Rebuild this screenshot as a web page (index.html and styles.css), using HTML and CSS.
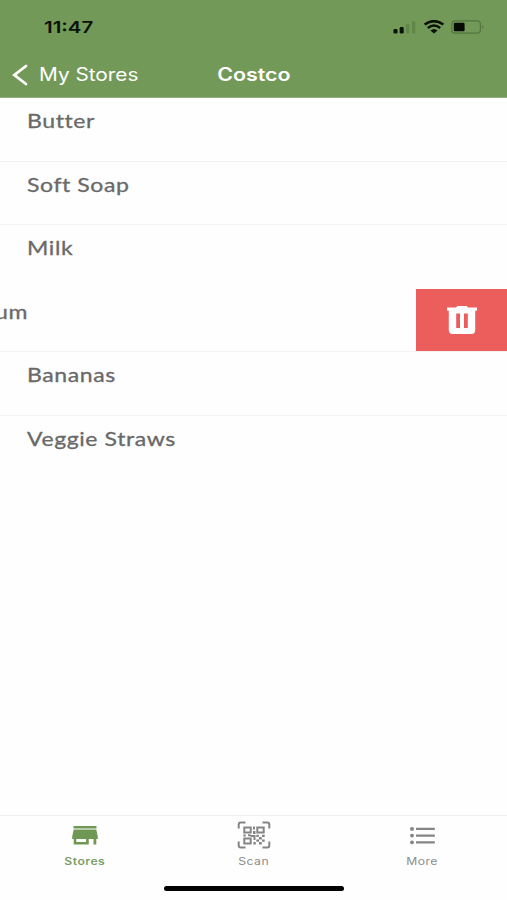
FILE: index.html
```
<!DOCTYPE html>
<html lang="en">
<head>
    <meta charset="UTF-8">
    <meta name="viewport" content="width=device-width, initial-scale=1.0">
    <title>Costco</title>
    <link rel="stylesheet" href="styles.css">
</head>
<body>
    <header class="header">
        <div class="status-bar">
            <span class="time">11:47</span>
            <div class="status-icons">
                <svg width="24" height="14" viewBox="0 0 24 14">
                    <rect x="0.5" y="9" width="4" height="4.4" rx="1.2" fill="#0a1205"/>
                    <rect x="6.7" y="7" width="4" height="6.4" rx="1.2" fill="#0a1205"/>
                    <rect x="13" y="4" width="3.4" height="9.4" rx="1.2" fill="#628549"/>
                    <rect x="19" y="1.2" width="3.4" height="12.2" rx="1.2" fill="#628549"/>
                </svg>
                <svg width="22" height="14" viewBox="0 0 22 14">
                    <path d="M1.6 4.6Q11-2.4 20.4 4.6" fill="none" stroke="#0a1205" stroke-width="2.5"/>
                    <path d="M4.8 8Q11 3 17.2 8" fill="none" stroke="#0a1205" stroke-width="2.4"/>
                    <path d="M7.4 10.4Q11 7.4 14.6 10.4L11 13.4Z" fill="#0a1205"/>
                </svg>
                <svg width="34" height="14" viewBox="0 0 34 14">
                    <rect x="0.8" y="0.8" width="28.6" height="12.4" rx="3.4" fill="none" stroke="#547440" stroke-width="1.2"/>
                    <rect x="2.8" y="2.7" width="10.800" height="8.6" rx="1.4" fill="#050a02"/>
                    <path d="M31.2 5Q34 7 31.2 9Z" fill="#547440"/>
                </svg>
            </div>
        </div>
        <nav class="nav-bar">
            <a class="back">
                <svg width="16" height="22" viewBox="0 0 16 22">
                    <path d="M14 2L2.400 11L14 20" fill="none" stroke="#fff" stroke-width="2.8" stroke-linecap="round" stroke-linejoin="miter"/>
                </svg>
                <span class="back-text">My Stores</span>
            </a>
            <h1 class="title">Costco</h1>
        </nav>
    </header>

    <main class="list">
        <div class="item"><span class="name">Butter</span></div>
        <div class="item"><span class="name">Soft Soap</span></div>
        <div class="item no-line"><span class="name">Milk</span></div>
        <div class="item swiped">
            <span class="name">um</span>
            <button class="delete" aria-label="Delete">
                <svg width="32" height="30" viewBox="0 0 32 30">
                    <path d="M11.5 1h9l1.6 1.6H31v3.2h-1.8V25q0 4-4 4H6.8q-4 0-4-4V5.800H1V2.600h8.900z" fill="#fff"/>
                    <path d="M10.200 8.500h3.800v14.500h-3.800zM18 8.500h3.800v14.500H18z" fill="#eb5e5b"/>
                </svg>
            </button>
        </div>
        <div class="item"><span class="name">Bananas</span></div>
        <div class="item no-line"><span class="name">Veggie Straws</span></div>
    </main>

    <footer class="tab-bar">
        <div class="tabs">
            <a class="tab active">
                <svg width="34" height="30" viewBox="0 0 34 30">
                    <path d="M5.500 6h23v2.500h-23zM5.700 9.500h22.600l1.500 7v2.500h-1.500v5.500h-2.800V19h-4.700v5.500H5.700V19H4.200v-2.500zM8.300 19v3h9.800v-3z" fill="#6f9854" fill-rule="evenodd"/>
                </svg>
                <span>Stores</span>
            </a>
            <a class="tab">
                <svg width="34" height="30" viewBox="0 0 34 30">
                    <g fill="none" stroke="#858585" stroke-width="2">
                        <path d="M1.700 8.500V4.500Q1.700 2.500 3.700 2.500H8.500M25.500 2.500h4.800q2 0 2 2v4M32.300 21.500v4q0 2-2 2h-4.800M8.500 27.500H3.700q-2 0-2-2v-4"/>
                        <path d="M7.300 7.500h6.400v5H7.300zM20.300 7.500h6.400v5h-6.400zM7.300 18.500h6.400v5H7.300z"/>
                    </g>
                    <path d="M16 6.500h2v3h-2zM16 11h2.500v3H16zM6.300 14.500h2.500v2H6.300zM11 14.200h2.500v2H11zM13.500 15h5v2h-5zM16.500 17h2v3h-2zM19.300 14.800h2.500v2.200h-2.500zM25 14.800h2.700v2.200H25zM22 17h2.800v2.500H22zM19.300 19.500H22v2.300h-2.700zM25 19.500h2.700v2.300H25zM16.300 22h2.500v2.500h-2.500zM22 22h2.800v2.500H22z" fill="#858585"/>
                </svg>
                <span>Scan</span>
            </a>
            <a class="tab">
                <svg width="34" height="30" viewBox="0 0 34 30">
                    <path d="M10 8.900h18.800M10 15.600h18.800M10 22.300h18.800" stroke="#858585" stroke-width="2.200"/>
                    <g fill="#858585">
                        <ellipse cx="6" cy="8.900" rx="2" ry="1.900"/>
                        <ellipse cx="6" cy="15.600" rx="2" ry="1.900"/>
                        <ellipse cx="6" cy="22.300" rx="2" ry="1.900"/>
                    </g>
                </svg>
                <span>More</span>
            </a>
        </div>
        <div class="home-indicator"></div>
    </footer>
</body>
</html>
```
FILE: styles.css
```
* {
    box-sizing: border-box;
}
body {
    margin: 0;
    height: 900px;
    display: flex;
    flex-direction: column;
    overflow: hidden;
    background: #fefefe;
    font-family: Inter, "Liberation Sans", sans-serif;
}

/* Header */
.header {
    height: 98px;
    flex-shrink: 0;
    background: #739959;
    border-bottom: 1px solid #92b07d;
}
.status-bar {
    height: 52px;
    padding: 2px 22px 0 44px;
    display: flex;
    align-items: center;
    justify-content: space-between;
}
.time {
    font-size: 16.5px;
    font-weight: 600;
    color: #0a1205;
    transform: scaleX(1.24);
    transform-origin: left;
}
.status-icons {
    display: flex;
    align-items: center;
    gap: 6px;
}
.nav-bar {
    height: 45px;
    padding: 0 12px;
    display: grid;
    grid-template-columns: 1fr auto 1fr;
    align-items: center;
    color: #fff;
}
.back {
    display: flex;
    align-items: center;
    gap: 11px;
}
.back-text {
    font-size: 18px;
    white-space: nowrap;
    transform: scaleX(1.155);
    transform-origin: left;
}
.title {
    margin: 0;
    font-size: 18px;
    font-weight: 600;
    transform: scaleX(1.19);
}

/* Shopping list */
.list {
    flex: 1;
}
.item {
    height: 63.6px;
    padding: 11px 27px 0;
    border-bottom: 1px solid #f3f3f3;
}
.item.no-line {
    border-bottom-color: transparent;
}
.name {
    display: inline-block;
    font-family: Lato, "Open Sans", sans-serif;
    font-size: 19.5px;
    line-height: 24px;
    letter-spacing: 0.5px;
    color: #696969;
    -webkit-text-stroke: 0.3px #696969;
    white-space: nowrap;
    transform: scaleX(1.18);
    transform-origin: left;
}
.swiped {
    padding: 0;
    display: flex;
    justify-content: space-between;
}
.swiped .name {
    margin: 11px 0 0 -5px;
}
.delete {
    width: 91px;
    height: 62.6px;
    padding: 0;
    border: 0;
    display: flex;
    align-items: center;
    justify-content: center;
    background: #eb5e5b;
}

/* Bottom tabs */
.tab-bar {
    height: 85px;
    flex-shrink: 0;
    border-top: 1px solid #efefef;
    display: flex;
    flex-direction: column;
    align-items: center;
}
.tabs {
    width: 100%;
    height: 70px;
    padding-top: 4px;
    display: flex;
}
.tab {
    flex: 1;
    display: flex;
    flex-direction: column;
    align-items: center;
    gap: 4px;
    font-size: 10px;
    line-height: 14px;
    letter-spacing: 0.4px;
    color: #8c8c8c;
}
.tab span {
    transform: scaleX(1.22);
}
.tab.active {
    color: #7d9e66;
    font-weight: 600;
}
.home-indicator {
    width: 180px;
    height: 5px;
    border-radius: 3px;
    background: #000;
}
```
